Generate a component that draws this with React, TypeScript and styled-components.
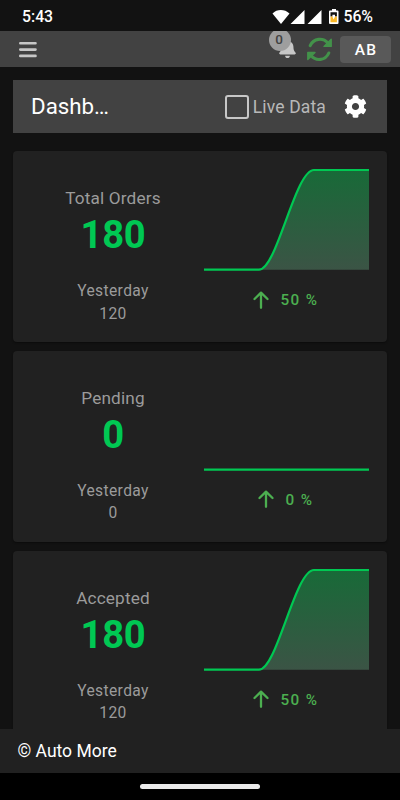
import React from "react";
import styled, { createGlobalStyle } from "styled-components";
import { FaBell, FaCog } from "react-icons/fa";

const GlobalStyle = createGlobalStyle`
  * { box-sizing: border-box; }
  html, body { margin: 0; padding: 0; background: #121212; }
  body { font-family: Roboto, "Noto Sans", sans-serif; color: #fff; overflow: hidden; }
`;

const Screen = styled.div`
  width: 400px;
  height: 800px;
  display: flex;
  flex-direction: column;
  background: #121212;
  overflow: hidden;
`;

const StatusBar = styled.header`
  flex: 0 0 31px;
  display: flex;
  justify-content: space-between;
  padding: 2px 27px 0 22px;
  align-items: center;
  font-size: 15.8px;
  font-weight: 500;
  line-height: 29px;
`;

const StatusIcons = styled.div`
  display: flex;
  align-items: center;
  font-size: 15.8px;
  svg { display: block; margin-top: 2px; }
`;

const Percent = styled.span`
  margin-left: 3px;
`;

const AppBar = styled.nav`
  flex: 0 0 36px;
  display: flex;
  align-items: center;
  justify-content: space-between;
  background: #424242;
  padding: 0 9px 0 19px;
`;

const Tools = styled.div`
  display: flex;
  align-items: center;
`;

const Alerts = styled.div`
  position: relative;
  width: 20px;
  height: 36px;
  padding-top: 8px;
  color: #c7c7c7;
  svg { display: block; }
`;

const AlertClip = styled.div`
  position: absolute;
  left: -9px;
  top: 0;
  width: 22px;
  height: 22px;
  overflow: hidden;
`;

const Count = styled.span`
  display: block;
  width: 22px;
  height: 22px;
  margin-top: -2px;
  border-radius: 50%;
  background: #9e9e9e;
  color: #424242;
  font-size: 13.5px;
  font-weight: 500;
  line-height: 21px;
  padding-right: 2px;
  text-align: center;
`;

const Sync = styled.div`
  margin: 1px 8px 0 9px;
  color: #43924a;
  svg { display: block; }
`;

const UserButton = styled.button`
  width: 51px;
  height: 27px;
  margin-top: 1px;
  padding: 1px 0 0 1px;
  border: 0;
  border-radius: 4px;
  background: #595959;
  color: #fff;
  font: 500 15.5px/26px Roboto, sans-serif;
  letter-spacing: 1.1px;
`;

const Content = styled.main`
  flex: 1 1 0;
  min-height: 0;
  padding: 13px 13px 0;
  overflow: hidden;
`;

const TitleBar = styled.section`
  height: 53px;
  margin-bottom: 18px;
  display: flex;
  align-items: center;
  background: #424242;
  padding: 0 20px 0 18px;
`;

const Title = styled.h1`
  margin: 0 0 1px;
  flex: 1;
  font-size: 22.3px;
  font-weight: 400;
  letter-spacing: 0;
  line-height: 51px;
`;

const CheckBox = styled.span`
  width: 24px;
  height: 24px;
  border: 2.5px solid #c7c7c7;
  border-radius: 3px;
`;

const CheckLabel = styled.span`
  margin: 0 18px 0 4px;
  font-size: 17.5px;
  letter-spacing: 0.15px;
  color: #b8b8b8;
`;

const Card = styled.article`
  height: 190.8px;
  margin-bottom: 9px;
  border-radius: 4px;
  background: #212121;
  display: grid;
  grid-template-columns: 200px 1fr;
  box-shadow: 0 1px 2px rgba(0, 0, 0, 0.4);
`;

const Figures = styled.div`
  padding-top: 35px;
  display: flex;
  flex-direction: column;
  align-items: center;
  text-align: center;
  color: #9b9b9b;
`;

const Label = styled.div`
  font-size: 17.2px;
  line-height: 24px;
  letter-spacing: 0.15px;
`;

const Value = styled.div`
  margin-top: 2px;
  font-size: 38.2px;
  font-weight: 700;
  line-height: 46px;
  letter-spacing: -0.3px;
  color: #00c853;
`;

const Previous = styled.div`
  margin-top: 22.2px;
  font-size: 15.6px;
  line-height: 22.4px;
  letter-spacing: 0.38px;
`;

const Trend = styled.div`
  padding-top: 17px;
  margin-left: -9px;
  display: flex;
  flex-direction: column;
  svg { display: block; }
`;

const Change = styled.div`
  width: 165px;
  margin-top: 18px;
  padding-right: 2px;
  display: flex;
  align-items: center;
  justify-content: center;
  gap: 12px;
  font-size: 15.3px;
  font-weight: 500;
  letter-spacing: 1.35px;
  line-height: 22px;
  color: #4caf50;
  svg { margin-top: -1px; }
`;

const Footer = styled.footer`
  flex: 0 0 44px;
  background: #212121;
  padding: 1px 0 0 17.5px;
  font-size: 17.5px;
  line-height: 43px;
`;

const SystemNav = styled.div`
  flex: 0 0 27px;
  display: flex;
  justify-content: center;
  padding-top: 11px;
  background: #000;
`;

const Pill = styled.div`
  width: 120px;
  height: 5px;
  border-radius: 3px;
  background: #ebebeb;
`;

const MenuIcon = styled.svg`
  margin-top: 1px;
`;

interface Metric {
  label: string;
  today: number;
  yesterday: number;
  change: number;
}

const metrics: Metric[] = [
  { label: "Total Orders", today: 180, yesterday: 120, change: 50 },
  { label: "Pending", today: 0, yesterday: 0, change: 0 },
  { label: "Accepted", today: 180, yesterday: 120, change: 50 },
];

const RISE = "M0 101.7 H55 C73 101.7 91 2 110 2 H165";

function Chart({ rising, id }: { rising: boolean; id: string }) {
  return (
    <svg width="165" height="103" viewBox="0 0 165 103">
      <defs>
        <linearGradient id={id} x1="0" y1="0" x2="0" y2="1">
          <stop offset="0" stopColor="#186a38" />
          <stop offset="1" stopColor="#3b5445" />
        </linearGradient>
      </defs>
      {rising && <path d={`${RISE} V101.7 Z`} fill={`url(#${id})`} />}
      <path d={rising ? RISE : "M0 101.7 H165"} fill="none" stroke="#00c853" strokeWidth="2.2" />
    </svg>
  );
}

function ArrowUp() {
  return (
    <svg width="16" height="18" viewBox="0 0 16 18" fill="none" stroke="currentColor" strokeWidth="2.3" strokeLinecap="round" strokeLinejoin="round">
      <path d="M1.5 8 8 1.7 14.5 8M8 2V16.8" />
    </svg>
  );
}

function SyncArrows() {
  return (
    <svg width="25" height="25" viewBox="0 0 25 25" fill="none" stroke="currentColor" strokeWidth="3.1" strokeLinecap="round">
      <path d="M3.2 8.6C6.5 1.2 16 .2 21 6.2M21.8 16C18.5 23.6 9 24.6 4 18.6" />
      <path d="M24.2 2.2V9.4H17ZM.8 22.6V15.4H8Z" fill="currentColor" strokeWidth="1.4" strokeLinejoin="round" />
    </svg>
  );
}

function StatusGlyphs() {
  return (
    <svg width="68" height="18" viewBox="0 0 68 18" fill="#fff">
      <path d="M0.5 4.4C5-.1 12.5-.1 17.5 4.4L9 15Z" />
      <path d="M18.5 15 32.5 1V15ZM35.5 15 49.5 1V15Z" />
      <g transform="translate(.5 0)">
        <path d="M59.5 0h4v1.5h1.5a1 1 0 0 1 1 1V14a1 1 0 0 1-1 1h-7.5a1 1 0 0 1-1-1V2.5a1 1 0 0 1 1-1h2Z" />
        <path d="M58 3.2h6.4v4.3h-1.9V5.7h-2.6v1.8H58Z" fill="#121212" />
        <path d="M58 7.5h1.8l1.4 3 1.4-3h1.8v5.8H58Z" fill="#fbb827" />
      </g>
    </svg>
  );
}

export default function App() {
  return (
    <>
      <GlobalStyle />
      <Screen>
        <StatusBar>
          <span>5:43</span>
          <StatusIcons>
            <StatusGlyphs />
            <Percent>56%</Percent>
          </StatusIcons>
        </StatusBar>
        <AppBar>
          <MenuIcon width="18" height="17" viewBox="0 0 18 17" stroke="#c7c7c7" strokeWidth="2.6" strokeLinecap="round">
            <path d="M1.3 2.3H16.5M1.3 8.6H16.5M1.3 14.9H16.5" />
          </MenuIcon>
          <Tools>
            <Alerts>
              <FaBell size={19} />
              <AlertClip>
                <Count>0</Count>
              </AlertClip>
            </Alerts>
            <Sync>
              <SyncArrows />
            </Sync>
            <UserButton>AB</UserButton>
          </Tools>
        </AppBar>
        <Content>
          <TitleBar>
            <Title>Dashb…</Title>
            <CheckBox />
            <CheckLabel>Live Data</CheckLabel>
            <FaCog size={23} />
          </TitleBar>
          {metrics.map((m) => (
            <Card key={m.label}>
              <Figures>
                <Label>{m.label}</Label>
                <Value>{m.today}</Value>
                <Previous>
                  <div>Yesterday</div>
                  <div>{m.yesterday}</div>
                </Previous>
              </Figures>
              <Trend>
                <Chart rising={m.change > 0} id={`area-${m.label.replace(" ", "-")}`} />
                <Change>
                  <ArrowUp />
                  <span>{m.change} %</span>
                </Change>
              </Trend>
            </Card>
          ))}
        </Content>
        <Footer>© Auto More</Footer>
        <SystemNav>
          <Pill />
        </SystemNav>
      </Screen>
    </>
  );
}
